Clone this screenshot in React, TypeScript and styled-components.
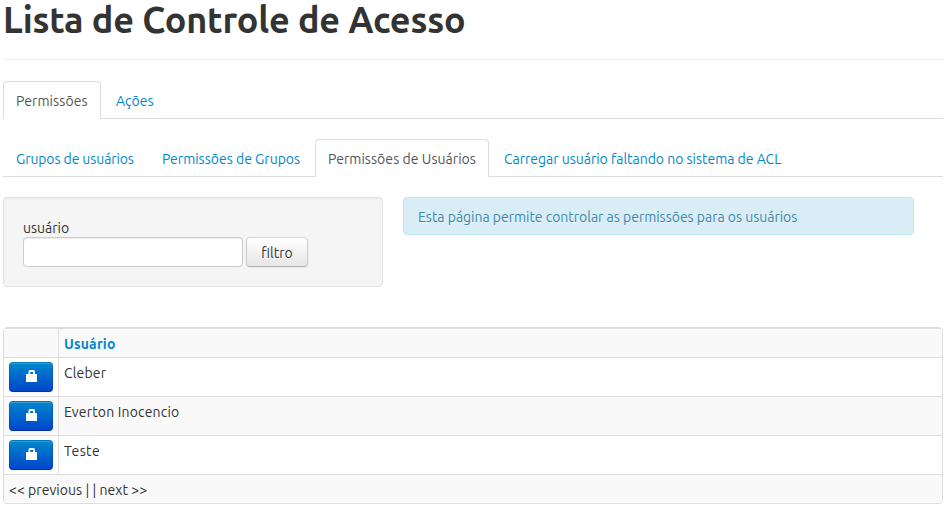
import React from 'react';
import styled, { createGlobalStyle, css } from 'styled-components';

const GlobalStyle = createGlobalStyle`
  *, *::before, *::after { box-sizing: border-box; }
  body {
    margin: 0;
    background: #fff;
    color: #333;
    font: 14px/20px Ubuntu, 'Noto Sans', sans-serif;
  }
`;

const Page = styled.main`
  width: 940px;
  margin-left: 3px;
`;

const PageHeader = styled.header`
  height: 60px;
  margin-bottom: 21px;
  border-bottom: 1px solid #eee;
`;

const Title = styled.h1`
  margin: 0;
  font: bold 36px/40px Ubuntu, Lato, sans-serif;
  letter-spacing: -0.17px;
  white-space: nowrap;
`;

const Text = styled.span<{ $tracking?: number }>`
  letter-spacing: ${({ $tracking = 0 }) => $tracking}px;
  white-space: nowrap;
`;

const TabBar = styled.nav`
  display: flex;
  gap: 2px;
  height: 38px;
  margin-bottom: 20px;
  border-bottom: 1px solid #ddd;
`;

const Tab = styled.a<{ $width: number; $active?: boolean }>`
  width: ${({ $width }) => $width}px;
  height: 38px;
  padding: 9px 0 0 12px;
  border: 1px solid transparent;
  border-radius: 4px 4px 0 0;
  color: #0088cc;
  text-decoration: none;
  ${({ $active }) =>
    $active &&
    css`
      background: #fff;
      border-color: #ddd #ddd #fff;
      color: #555;
    `}
`;

const Columns = styled.section`
  display: flex;
  align-items: flex-start;
  gap: 20px;
  margin-bottom: 40px;
`;

const Well = styled.form`
  width: 380px;
  height: 90px;
  padding: 20px 19px 0;
  background: #f5f5f5;
  border: 1px solid #e3e3e3;
  border-radius: 4px;
  box-shadow: inset 0 1px 1px rgba(0, 0, 0, 0.05);
`;

const FieldLabel = styled.label`
  display: block;
  height: 19px;
`;

const FieldRow = styled.div`
  display: flex;
  gap: 3px;
`;

const Input = styled.input`
  width: 220px;
  height: 30px;
  padding: 4px 6px;
  background: #fff;
  border: 1px solid #ccc;
  border-radius: 4px;
  box-shadow: inset 0 1px 1px rgba(0, 0, 0, 0.075);
  font: inherit;
`;

const FilterButton = styled.button`
  width: 62px;
  height: 30px;
  padding: 1px 0 0;
  border: 1px solid #ccc;
  border-color: #d5d5d5 #ccc #b3b3b3;
  border-radius: 4px;
  background: linear-gradient(#fff, #e6e6e6);
  box-shadow: inset 0 1px 0 rgba(255, 255, 255, 0.2), 0 1px 2px rgba(0, 0, 0, 0.05);
  color: #333;
  font: inherit;
  text-shadow: 0 1px 1px rgba(255, 255, 255, 0.75);
`;

const Alert = styled.div`
  width: 511px;
  height: 38px;
  padding: 9px 14px;
  background: #d9edf7;
  border: 1px solid #bce8f1;
  border-radius: 4px;
  color: #3a87ad;
  text-shadow: 0 1px 0 rgba(255, 255, 255, 0.5);
`;

const Table = styled.div`
  border: 1px solid #ddd;
  border-radius: 4px;
  overflow: hidden;
`;

const Row = styled.div<{ $height: number; $shaded?: boolean }>`
  display: grid;
  grid-template-columns: 54px 1fr;
  height: ${({ $height }) => $height}px;
  border-top: 1px solid #ddd;
  background: ${({ $shaded }) => ($shaded ? '#f9f9f9' : '#fff')};
`;

const Cell = styled.div`
  padding: 5px;

  & + & {
    border-left: 1px solid #ddd;
  }
`;

const ActionCell = styled(Cell)`
  padding: 4px 5px;
`;

const HeadLink = styled.a`
  color: #0088cc;
  font-weight: bold;
`;

const Pager = styled.footer`
  height: 29px;
  padding: 5px;
  border-top: 1px solid #ddd;
  background: #f9f9f9;
`;

const LockButton = styled.button`
  display: flex;
  width: 44px;
  height: 30px;
  padding: 7px 0 0 16px;
  border: 1px solid rgba(0, 0, 0, 0.1);
  border-bottom-color: rgba(0, 0, 0, 0.25);
  border-radius: 4px;
  background: linear-gradient(#0088cc, #0044cc) border-box;
  box-shadow: inset 0 1px 0 rgba(255, 255, 255, 0.2), 0 1px 2px rgba(0, 0, 0, 0.05);
`;

const LockIcon = () => (
  <svg width="11" height="12" viewBox="0 0 11 12" fill="#fff" aria-hidden="true">
    <path
      fillRule="evenodd"
      d="M0 4H2.5V1.5Q2.5 0 4 0H7.5Q9 0 9 1.5V4H11V12H0ZM4.2 2V4H7.2V2Z"
    />
  </svg>
);

type TabItem = { label: string; width: number; tracking?: number; active?: boolean };

const mainTabs: TabItem[] = [
  { label: 'Permissões', width: 98, tracking: 0.1, active: true },
  { label: 'Ações', width: 64 },
];

const permissionTabs: TabItem[] = [
  { label: 'Grupos de usuários', width: 144, tracking: -0.1 },
  { label: 'Permissões de Grupos', width: 164 },
  { label: 'Permissões de Usuários', width: 174, tracking: 0.05, active: true },
  { label: 'Carregar usuário faltando no sistema de ACL', width: 304, tracking: -0.02 },
];

const users = [
  { name: 'Cleber', tracking: 0.15 },
  { name: 'Everton Inocencio', tracking: 0.17 },
  { name: 'Teste', tracking: 0.4 },
];

const Tabs = ({ items }: { items: TabItem[] }) => (
  <TabBar>
    {items.map(({ label, width, tracking, active }) => (
      <Tab key={label} $width={width} $active={active}>
        <Text $tracking={tracking}>{label}</Text>
      </Tab>
    ))}
  </TabBar>
);

export default function App() {
  return (
    <>
      <GlobalStyle />
      <Page>
        <PageHeader>
          <Title>Lista de Controle de Acesso</Title>
        </PageHeader>
        <Tabs items={mainTabs} />
        <Tabs items={permissionTabs} />
        <Columns>
          <Well onSubmit={(event) => event.preventDefault()}>
            <FieldLabel htmlFor="user">usuário</FieldLabel>
            <FieldRow>
              <Input id="user" />
              <FilterButton>filtro</FilterButton>
            </FieldRow>
          </Well>
          <Alert>
            <Text $tracking={-0.02}>
              Esta página permite controlar as permissões para os usuários
            </Text>
          </Alert>
        </Columns>
        <Table>
          <Row $height={29} $shaded>
            <Cell />
            <Cell>
              <HeadLink>
                <Text $tracking={0.17}>Usuário</Text>
              </HeadLink>
            </Cell>
          </Row>
          {users.map(({ name, tracking }, index) => (
            <Row key={name} $height={39} $shaded={index % 2 === 1}>
              <ActionCell>
                <LockButton aria-label={name}>
                  <LockIcon />
                </LockButton>
              </ActionCell>
              <Cell>
                <Text $tracking={tracking}>{name}</Text>
              </Cell>
            </Row>
          ))}
          <Pager>
            <Text $tracking={0.04}>{'<< previous | | next >>'}</Text>
          </Pager>
        </Table>
      </Page>
    </>
  );
}
